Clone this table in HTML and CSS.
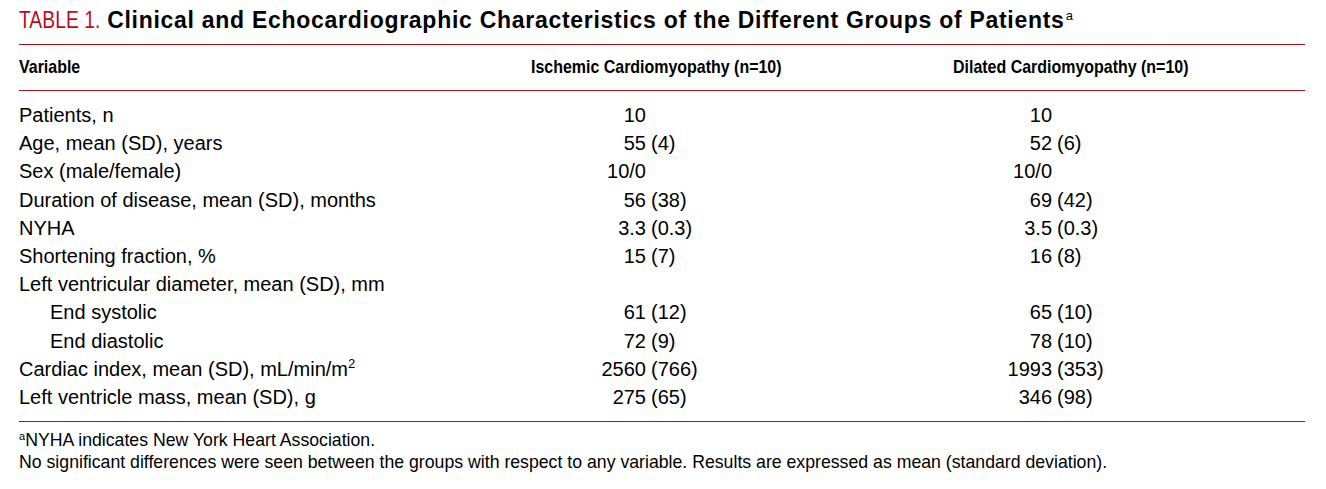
FILE: index.html
```html
<!DOCTYPE html>
<html>
<head>
<meta charset="utf-8">
<link rel="stylesheet" href="styles.css">
</head>
<body>
<div class="wrap">
  <div class="title"><span class="tlabel">TABLE 1.</span> <span class="ttext">Clinical and Echocardiographic Characteristics of the Different Groups of Patients<sup class="tsup">a</sup></span></div>
  <table class="tbl">
    <colgroup>
      <col class="c-label">
      <col class="c-num1">
      <col class="c-sd1">
      <col class="c-num2">
      <col class="c-sd2">
    </colgroup>
    <thead>
      <tr>
        <th class="h-label"><span class="hx">Variable</span></th>
        <th class="h-grp" colspan="2"><span class="hx">Ischemic Cardiomyopathy (n=10)</span></th>
        <th class="h-grp" colspan="2"><span class="hx">Dilated Cardiomyopathy (n=10)</span></th>
      </tr>
    </thead>
    <tbody>
      <tr class="first"><td>Patients, n</td><td class="num">10</td><td class="sd"></td><td class="num">10</td><td class="sd"></td></tr>
      <tr><td>Age, mean (SD), years</td><td class="num">55</td><td class="sd">(4)</td><td class="num">52</td><td class="sd">(6)</td></tr>
      <tr><td>Sex (male/female)</td><td class="num">10/0</td><td class="sd"></td><td class="num">10/0</td><td class="sd"></td></tr>
      <tr><td>Duration of disease, mean (SD), months</td><td class="num">56</td><td class="sd">(38)</td><td class="num">69</td><td class="sd">(42)</td></tr>
      <tr><td>NYHA</td><td class="num">3.3</td><td class="sd">(0.3)</td><td class="num">3.5</td><td class="sd">(0.3)</td></tr>
      <tr><td>Shortening fraction, %</td><td class="num">15</td><td class="sd">(7)</td><td class="num">16</td><td class="sd">(8)</td></tr>
      <tr><td>Left ventricular diameter, mean (SD), mm</td><td class="num"></td><td class="sd"></td><td class="num"></td><td class="sd"></td></tr>
      <tr><td class="indent">End systolic</td><td class="num">61</td><td class="sd">(12)</td><td class="num">65</td><td class="sd">(10)</td></tr>
      <tr><td class="indent">End diastolic</td><td class="num">72</td><td class="sd">(9)</td><td class="num">78</td><td class="sd">(10)</td></tr>
      <tr><td>Cardiac index, mean (SD), mL/min/m<sup class="sup2">2</sup></td><td class="num">2560</td><td class="sd">(766)</td><td class="num">1993</td><td class="sd">(353)</td></tr>
      <tr class="last"><td>Left ventricle mass, mean (SD), g</td><td class="num">275</td><td class="sd">(65)</td><td class="num">346</td><td class="sd">(98)</td></tr>
    </tbody>
  </table>
  <div class="notes">
    <p class="note"><sup class="nsup">a</sup>NYHA indicates New York Heart Association.</p>
    <p class="note">No significant differences were seen between the groups with respect to any variable. Results are expressed as mean (standard deviation).</p>
  </div>
</div>
</body>
</html>
```
FILE: styles.css
```css
html, body {
  margin: 0;
  padding: 0;
  background: #ffffff;
}
.wrap {
  margin-left: 19px;
  width: 1286px;
  font-family: "Liberation Sans", Arial, sans-serif;
  color: #000;
}
.title {
  font-size: 23px;
  line-height: 26px;
  padding-top: 7px;
  padding-bottom: 7px;
  border-bottom: 1px solid #a8101c;
  white-space: nowrap;
}
.tlabel {
  display: inline-block;
  color: #bc0a1e;
  font-weight: normal;
  transform: scaleX(0.84);
  transform-origin: left center;
  margin-right: -15px;
}
.ttext {
  font-weight: bold;
  letter-spacing: 0.72px;
}
.tsup {
  font-size: 13px;
  font-weight: normal;
  letter-spacing: 0;
  vertical-align: 0;
  position: relative;
  top: -8px;
  margin-left: 1px;
}
.tbl {
  width: 1286px;
  border-collapse: collapse;
  table-layout: fixed;
}
.c-label { width: 512px; }
.c-num1 { width: 115px; }
.c-sd1 { width: 307px; }
.c-num2 { width: 99px; }
.c-sd2 { width: 253px; }
.tbl th {
  font-size: 19px;
  font-weight: bold;
  line-height: 20px;
  text-align: left;
  padding: 12px 0 13px 0;
  border-bottom: 1px solid #a8101c;
  white-space: nowrap;
}
.hx {
  display: inline-block;
  transform: scaleX(0.84);
  transform-origin: left center;
}
.tbl td {
  font-size: 20px;
  line-height: 28.2px;
  padding: 0;
  white-space: nowrap;
  vertical-align: baseline;
}
.tbl tr.first td { padding-top: 10px; }
.tbl tr.last td {
  padding-bottom: 10px;
  border-bottom: 1px solid #a8101c;
}
.tbl td.num { text-align: right; }
.tbl td.sd { padding-left: 5px; }
.tbl td.indent { padding-left: 31px; }
.sup2 {
  font-size: 13px;
  line-height: 0;
  vertical-align: 0;
  position: relative;
  top: -8px;
}
.notes {
  padding-top: 8px;
}
.note {
  margin: 0;
  font-size: 17.7px;
  line-height: 21.5px;
  white-space: nowrap;
}
.nsup {
  font-size: 11px;
  line-height: 0;
  vertical-align: 0;
  position: relative;
  top: -6px;
}
```
